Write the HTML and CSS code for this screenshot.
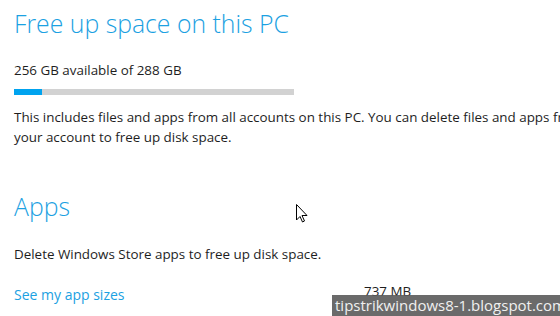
FILE: index.html
```html
<!DOCTYPE html>
<html>
<head>
<meta charset="utf-8">
<link rel="stylesheet" href="styles.css">
</head>
<body>
<main class="page">
  <h1 class="heading">Free up space on this PC</h1>
  <p class="avail">256 GB available of 288 GB</p>
  <div class="bar"><div class="fill" style="width:10%"></div></div>
  <p class="desc">This includes files and apps from all accounts on this PC. You can delete files and apps from<br>your account to free up disk space.</p>
  <h2 class="heading apps">Apps</h2>
  <p class="text">Delete Windows Store apps to free up disk space.</p>
  <div class="row">
    <a class="link">See my app sizes</a>
    <span class="size">737 MB</span>
  </div>
</main>
<svg class="cursor" width="12" height="19" viewBox="0 0 12 19"><path d="M0.5 0.5 L0.5 16 L4 12.5 L6.5 18 L8.5 17 L6 11.5 L11 11.5 Z" fill="#fff" stroke="#000" stroke-width="1"/></svg>
<div class="watermark">tipstrikwindows8-1.blogspot.com</div>
</body>
</html>
```
FILE: styles.css
```css
html, body {
  margin: 0;
  padding: 0;
  background: #fff;
  overflow: hidden;
  width: 560px;
  height: 316px;
}
body {
  position: relative;
  font-family: "Open Sans", "Noto Sans", sans-serif;
  color: #1e1e1e;
}
.page {
  padding: 5px 0 0 14px;
}
.heading {
  margin: 0;
  font-weight: 300;
  font-size: 24.8px;
  line-height: 36px;
  color: #1ba1e2;
  white-space: nowrap;
}
.avail {
  margin: 19px 0 0;
  font-size: 13.4px;
  line-height: 20px;
}
.bar {
  margin-top: 9px;
  width: 280px;
  height: 6px;
  background: #d2d2d2;
}
.fill {
  height: 100%;
  background: #00a3ef;
}
.desc {
  margin: 12px 0 0;
  font-size: 13.4px;
  line-height: 20px;
  white-space: nowrap;
}
.apps {
  margin-top: 41px;
}
.text {
  margin: 20px 0 0;
  font-size: 13.4px;
  line-height: 20px;
}
.row {
  margin-top: 21px;
  display: grid;
  grid-template-columns: 350px auto;
  font-size: 13.4px;
  line-height: 20px;
}
.link {
  color: #1ba1e2;
  font-size: 14px;
}
.size {
  margin-top: -4px;
}
.cursor {
  position: absolute;
  left: 296px;
  top: 204px;
}
.watermark {
  position: absolute;
  left: 332px;
  top: 295px;
  width: 228px;
  height: 21px;
  background: rgba(90, 90, 90, 0.9);
  color: #f0f0f0;
  font-size: 15px;
  line-height: 21px;
  padding-left: 3px;
  box-sizing: border-box;
  white-space: nowrap;
}
```
